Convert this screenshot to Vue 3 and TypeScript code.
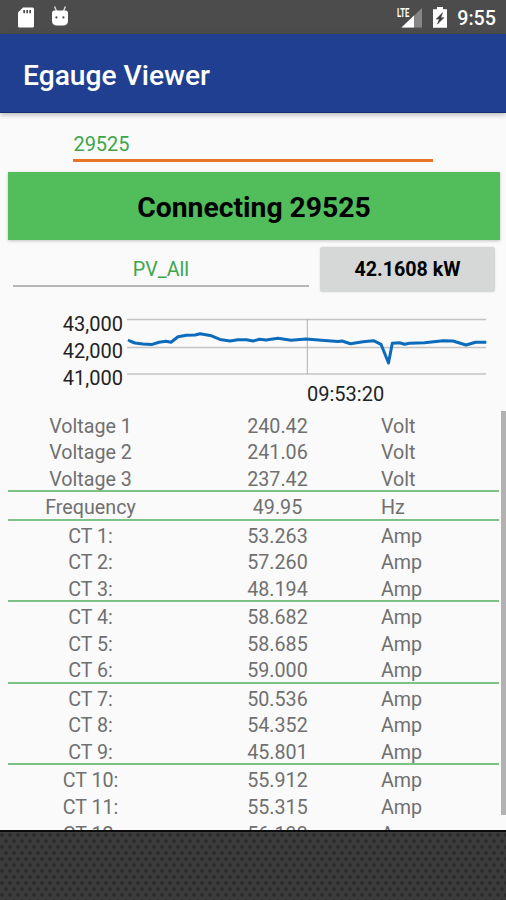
<script setup lang="ts">
interface Reading {
  label: string
  value: string
  unit: string
}

const groups: Reading[][] = [
  [
    { label: 'Voltage 1', value: '240.42', unit: 'Volt' },
    { label: 'Voltage 2', value: '241.06', unit: 'Volt' },
    { label: 'Voltage 3', value: '237.42', unit: 'Volt' },
  ],
  [{ label: 'Frequency', value: '49.95', unit: 'Hz' }],
  [
    { label: 'CT 1:', value: '53.263', unit: 'Amp' },
    { label: 'CT 2:', value: '57.260', unit: 'Amp' },
    { label: 'CT 3:', value: '48.194', unit: 'Amp' },
  ],
  [
    { label: 'CT 4:', value: '58.682', unit: 'Amp' },
    { label: 'CT 5:', value: '58.685', unit: 'Amp' },
    { label: 'CT 6:', value: '59.000', unit: 'Amp' },
  ],
  [
    { label: 'CT 7:', value: '50.536', unit: 'Amp' },
    { label: 'CT 8:', value: '54.352', unit: 'Amp' },
    { label: 'CT 9:', value: '45.801', unit: 'Amp' },
  ],
  [
    { label: 'CT 10:', value: '55.912', unit: 'Amp' },
    { label: 'CT 11:', value: '55.315', unit: 'Amp' },
    { label: 'CT 12:', value: '56.193', unit: 'Amp' },
  ],
]

const axisLabels: string[] = ['43,000', '42,000', '41,000']

// Plot coordinates, relative to the top left of the chart area
const points: [number, number][] = [
  [1, 27], [4, 28.5], [8, 30], [16, 31], [24.5, 31.6], [32, 29.3], [39, 28.3], [44, 29.2],
  [51, 23.7], [59.5, 22.3], [68, 22], [73, 20.7], [84.5, 22.8], [93, 26.4], [103, 28],
  [111, 26.7], [119.5, 26.7], [126, 28], [132.5, 26.3], [139, 27], [151, 25.3], [164, 27.3],
  [179, 26], [197.5, 27.5], [211, 28.5], [215, 28], [223.5, 30.7], [236, 28.7], [246.5, 27.7],
  [254, 31.3], [261.5, 50], [265.3, 30.3], [272.5, 29.7], [277.5, 31.3], [282.5, 30.2],
  [297.5, 29.7], [316, 27.7], [326, 28], [339, 32], [348.5, 29.3], [359.3, 29.3],
]
const line = points.map((p) => p.join(',')).join(' ')
</script>

<template>
  <div class="screen">
    <header class="status">
      <svg class="sd" viewBox="0 0 18 22" width="18" height="22">
        <path d="M6 0.5H15.5Q17 0.5 17 2V19Q17 20.5 15.5 20.5H2.5Q1 20.5 1 19V5.5Z" fill="#fff" />
        <path d="M6.3 3H8V6.2H6.3ZM9.3 3H11V6.2H9.3ZM12.3 3H14V6.2H12.3Z" fill="#4c4c4c" />
      </svg>
      <svg class="droid" viewBox="0 0 18 22" width="18" height="22">
        <path d="M3.6 -0.5L5.6 4.5M14.4 -0.5L12.4 4.5" stroke="#ddd" stroke-width="1.4" />
        <path d="M1 6Q1 3.5 3.5 3.5H14.5Q17 3.5 17 6V13.5Q17 18.5 12 18.5H6Q1 18.5 1 13.5Z" fill="#fff" />
        <circle cx="5.4" cy="10.4" r="1.1" fill="#4c4c4c" />
        <circle cx="12.4" cy="10.4" r="1.1" fill="#4c4c4c" />
      </svg>
      <span class="grow"></span>
      <span class="signal">
        <svg viewBox="0 0 26 22" width="26" height="22">
          <path d="M25 1V20.5H4.5Z" fill="#868686" />
          <path d="M17 8.6V20.5H4.5Z" fill="#fff" />
        </svg>
        <span class="lte">LTE</span>
      </span>
      <svg class="battery" viewBox="0 0 14 22" width="14" height="22">
        <path d="M4 0H10V2.2H14V20.8H0V2.2H4Z" fill="#fff" />
        <path d="M9.6 5.7L3.3 12.1H6.4L4.5 17.1L10.8 10.7H7.7Z" fill="#3c3c3c" stroke="#3c3c3c" stroke-width="0.6" />
      </svg>
      <span class="clock">9:55</span>
    </header>

    <div class="appbar">Egauge Viewer</div>

    <main class="body">
      <div class="device">29525</div>
      <div class="connect">Connecting 29525</div>
      <div class="register">
        <div class="name">PV_All</div>
        <div class="power">42.1608 kW</div>
      </div>
      <div class="chart">
        <div class="axis">
          <span v-for="a in axisLabels" :key="a">{{ a }}</span>
        </div>
        <div class="plot">
          <svg viewBox="0 0 362 66" width="362" height="66">
            <path d="M0 6.5H359M0 34.5H359M0 61H359" stroke="#c4c4c4" stroke-width="1.3" />
            <path d="M180.3 6V61" stroke="#b0b0b0" stroke-width="1" />
            <polyline :points="line" fill="none" stroke="#0d6bbb" stroke-width="3" stroke-linejoin="round" />
          </svg>
          <div class="time">09:53:20</div>
        </div>
      </div>
      <div class="list">
        <div v-for="(g, i) in groups" :key="i" class="group">
          <div v-for="r in g" :key="r.label" class="row">
            <span class="label">{{ r.label }}</span>
            <span class="value">{{ r.value }}</span>
            <span class="unit">{{ r.unit }}</span>
          </div>
        </div>
        <div class="scrollbar"></div>
      </div>
    </main>
    <footer class="backdrop"></footer>
  </div>
</template>

<style>
body {
  margin: 0;
  overflow: hidden;
}
</style>

<style scoped>
.screen {
  width: 506px;
  height: 900px;
  display: flex;
  flex-direction: column;
  overflow: hidden;
  background: #fafafa;
  font-family: Roboto, 'Liberation Sans', sans-serif;
  font-size: 19.7px;
  color: #707070;
}
.status {
  height: 34px;
  flex: none;
  box-sizing: border-box;
  display: flex;
  align-items: flex-start;
  padding: 7px 10px 0 17px;
  background: #4c4c4c;
  color: #fff;
}
.droid {
  margin-left: 16px;
  overflow: visible;
}
.grow {
  flex: 1;
}
.signal {
  position: relative;
  width: 26px;
  height: 22px;
  margin-right: 10px;
}
.lte {
  position: absolute;
  left: 0;
  top: 0;
  font-size: 12px;
  line-height: 12px;
  font-weight: 700;
  transform: scaleX(0.64);
  transform-origin: left;
  -webkit-text-stroke: 1.4px #4c4c4c;
  paint-order: stroke;
}
.battery {
  margin-right: 10px;
}
.clock {
  font-weight: 500;
  line-height: 24px;
}
.appbar {
  height: 79px;
  flex: none;
  box-sizing: border-box;
  padding: 3px 23px 0;
  background: #213f90;
  border-bottom: 1px solid #142c78;
  box-shadow: 0 2px 5px rgba(0, 0, 0, 0.26);
  color: #fff;
  font-size: 28.2px;
  font-weight: 500;
  line-height: 78px;
  z-index: 1;
}
.body {
  flex: none;
  height: 717px;
  display: flex;
  flex-direction: column;
}
.device {
  margin: 18px 73px 0 73.4px;
  width: 360px;
  height: 28px;
  line-height: 26px;
  border-bottom: 3px solid #e87524;
  color: #3da64b;
  font-size: 20px;
}
.connect {
  margin: 10px 6px 0 8px;
  height: 68px;
  flex: none;
  line-height: 71px;
  text-align: center;
  background: #52be5b;
  box-shadow: 0 1px 3px rgba(0, 0, 0, 0.22);
  color: #000;
  font-size: 28.3px;
  font-weight: 700;
}
.register {
  display: flex;
  flex: none;
  align-items: flex-start;
  padding: 7px 11px 0 13px;
}
.name {
  width: 296px;
  height: 40px;
  line-height: 46px;
  text-align: center;
  border-bottom: 2px solid #b6b6b6;
  color: #3da64b;
  box-sizing: border-box;
}
.power {
  margin-left: 11px;
  flex: 1;
  height: 45px;
  line-height: 46px;
  text-align: center;
  border-radius: 3px;
  background: #d6d7d7;
  box-shadow: 0 0 2px rgba(0, 0, 0, 0.15);
  color: #000;
  font-weight: 700;
}
.chart {
  display: flex;
  flex: none;
  height: 118px;
  padding-top: 21px;
  box-sizing: border-box;
  color: #222;
  font-size: 20px;
}
.axis {
  width: 123px;
  display: flex;
  flex-direction: column;
  text-align: right;
  line-height: 23px;
  margin-right: 4px;
}
.axis span {
  height: 27px;
}
.plot {
  display: flex;
  flex-direction: column;
}
.time {
  padding-left: 180px;
  line-height: 27px;
  margin-top: 2px;
}
.plot svg {
  flex: none;
}
.list {
  position: relative;
  flex: 1;
  min-height: 0;
  overflow: hidden;
  padding-top: 0.8px;
}
.group {
  margin: 0 7px 0 8px;
  padding-bottom: 1.5px;
  background: linear-gradient(#7cc284, #7cc284) left bottom / 100% 2px no-repeat;
}
.row {
  display: grid;
  grid-template-columns: 165px 209px 1fr;
  height: 26.7px;
  line-height: 32px;
}
.label,
.value {
  text-align: center;
}
.unit {
  margin-left: -1px;
}
.scrollbar {
  position: absolute;
  right: 0;
  top: 1px;
  width: 5px;
  height: 404px;
  background: #b2b2b2;
}
.backdrop {
  flex: 1;
  border-top: 2px solid #0c0c0c;
  background-color: #3b3b3b;
  background-image: radial-gradient(circle at 2px 3px, #2a2a2a 1.2px, transparent 2.2px),
    radial-gradient(circle at 6px 9px, #2a2a2a 1.2px, transparent 2.2px);
  background-size: 8px 12px;
}
</style>
